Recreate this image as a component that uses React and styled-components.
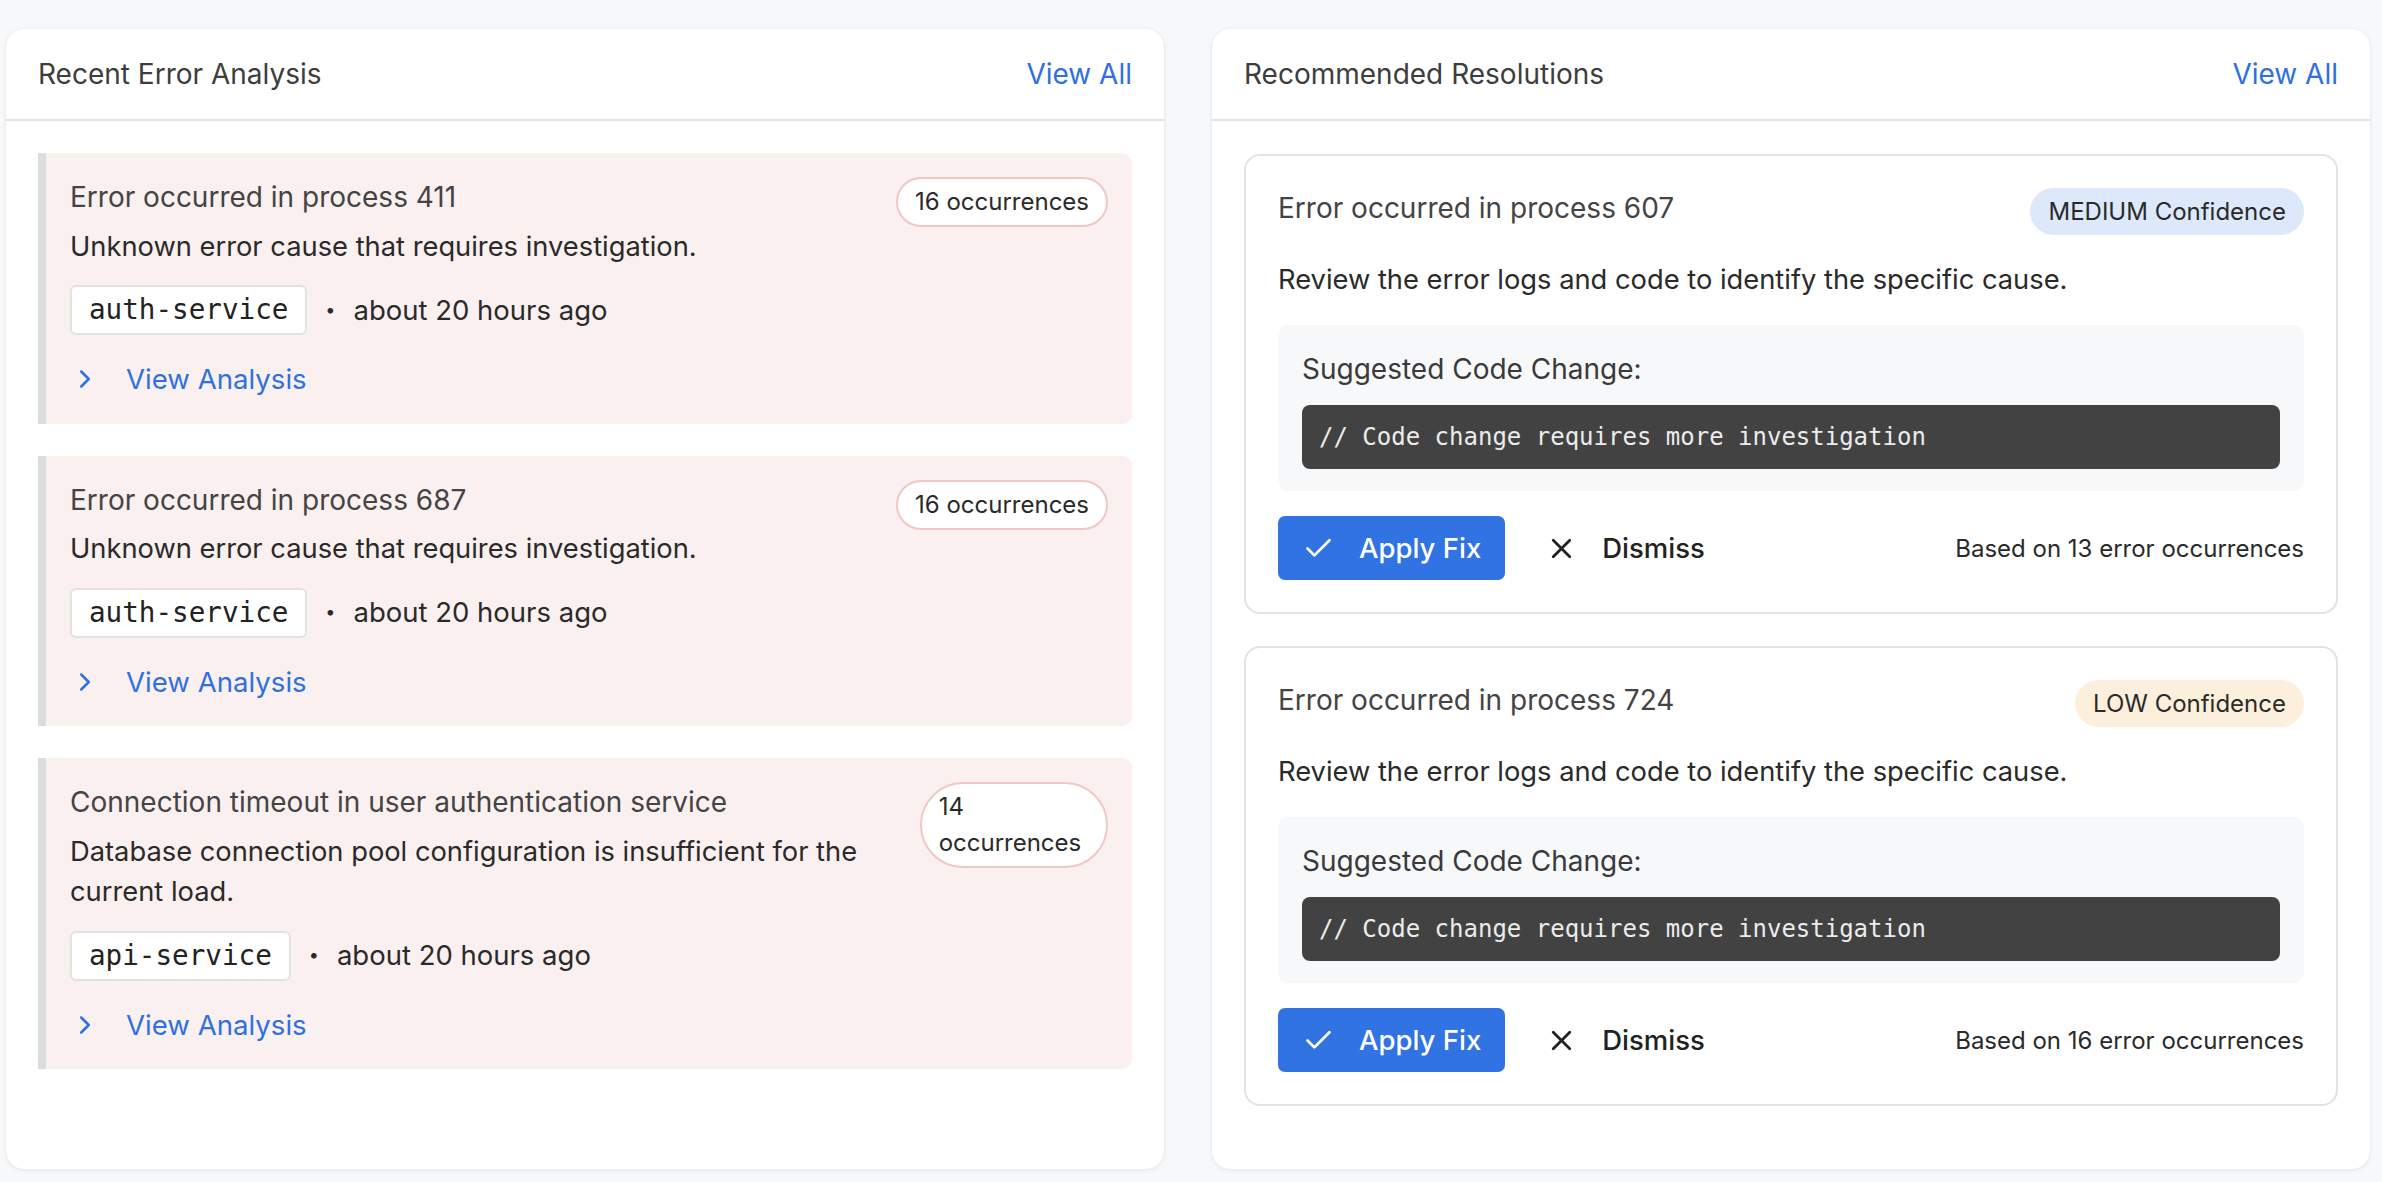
import React from "react";
import styled, { createGlobalStyle } from "styled-components";
import { ChevronRight, Check, X } from "lucide-react";

const GlobalStyle = createGlobalStyle`
  *, *::before, *::after {
    box-sizing: border-box;
  }
  body {
    margin: 0;
    background: #f7f8fa;
    font-family: Inter, "Noto Sans", sans-serif;
    color: #2a2a2a;
  }
`;

const Page = styled.main`
  display: grid;
  grid-template-columns: 1fr 1fr;
  gap: 48px;
  padding: 29px 12px 13px 6px;
`;

const Panel = styled.section`
  display: flex;
  flex-direction: column;
  height: 1140px;
  background: #fff;
  border-radius: 18px;
  box-shadow: 0 1px 4px rgba(0, 0, 0, 0.08), 0 0 1px rgba(0, 0, 0, 0.06);
  overflow: hidden;
`;

const PanelHeader = styled.header`
  display: flex;
  align-items: center;
  justify-content: space-between;
  height: 92px;
  padding: 0 32px;
  border-bottom: 2px solid #e4e4e4;
`;

const PanelTitle = styled.h2`
  margin: 0;
  font-size: 28px;
  font-weight: 400;
  color: #3d3d3d;
`;

const ViewAll = styled.a`
  font-size: 28px;
  color: #2f70e0;
  text-decoration: none;
  cursor: pointer;
`;

const PanelBody = styled.div`
  display: flex;
  flex-direction: column;
  gap: 32px;
  padding: ${(props) => (props.tight ? "33px 32px" : "32px")};
`;

/* error analysis */

const ErrorCard = styled.article`
  display: flex;
  align-items: flex-start;
  justify-content: space-between;
  gap: 24px;
  padding: 24px;
  background: #fbf0f0;
  border-left: 8px solid #dcdcdf;
  border-radius: 0 10px 10px 0;
`;

const ErrorInfo = styled.div`
  display: flex;
  flex-direction: column;
  align-items: flex-start;
`;

const ErrorTitle = styled.h3`
  margin: 0 0 9px;
  font-size: 28px;
  font-weight: 400;
  line-height: 40.5px;
  color: #444;
`;

const ErrorDesc = styled.p`
  margin: 0;
  font-size: 27.3px;
  line-height: 40.5px;
  color: #2a2a2a;
`;

const MetaRow = styled.div`
  display: flex;
  align-items: center;
  gap: 18px;
  margin-top: 18px;
  font-size: 27.5px;
  line-height: 40.5px;
  color: #2a2a2a;
`;

const ServiceChip = styled.code`
  font-family: "DejaVu Sans Mono", "Liberation Mono", monospace;
  font-size: 27.6px;
  line-height: 42px;
  padding: 2px 17px;
  background: #fff;
  border: 2px solid #e2e2e2;
  border-radius: 6px;
  color: #222;
`;

const Dot = styled.span`
  font-size: 18px;
`;

const ViewAnalysis = styled.button`
  display: flex;
  align-items: center;
  gap: 26px;
  margin-top: 24px;
  padding: 0;
  background: none;
  border: none;
  font-family: inherit;
  font-size: 27.6px;
  line-height: 40.5px;
  color: #2f70e0;
  cursor: pointer;
`;

const Occurrences = styled.span`
  padding: 5px 17px;
  font-size: 24px;
  line-height: 1.5;
  background: #fff;
  border: 2px solid #f3c6c6;
  border-radius: 999px;
  color: #2a2a2a;
`;

/* resolutions */

const ResCard = styled.article`
  padding: 32px;
  background: #fff;
  border: 2px solid #e3e3e3;
  border-radius: 16px;
`;

const ResHead = styled.div`
  display: flex;
  align-items: flex-start;
  justify-content: space-between;
  gap: 24px;
`;

const ResTitle = styled.h3`
  margin: 0;
  font-size: 28px;
  font-weight: 400;
  line-height: 40.5px;
  color: #444;
`;

const Confidence = styled.span`
  padding: 5.5px 18px;
  font-size: 24px;
  line-height: 36px;
  border-radius: 999px;
  color: #2a2a2a;
  background: ${(props) => (props.level === "LOW" ? "#fcefdc" : "#dde8fb")};
`;

const ResDesc = styled.p`
  margin: 25px 0 0;
  font-size: 27.3px;
  line-height: 40.5px;
  color: #2a2a2a;
`;

const CodeBox = styled.div`
  margin-top: 24px;
  padding: 24px 24px 22px;
  background: #f7f8fa;
  border-radius: 10px;
`;

const CodeLabel = styled.div`
  font-size: 28px;
  line-height: 40.5px;
  color: #3a3a3a;
`;

const CodeBlock = styled.pre`
  margin: 16px 0 0;
  padding: 14px 17px;
  background: #424242;
  border-radius: 8px;
  font-family: "DejaVu Sans Mono", "Liberation Mono", monospace;
  font-size: 24px;
  line-height: 36px;
  color: #ececec;
`;

const Actions = styled.div`
  display: flex;
  align-items: center;
  gap: 16px;
  margin-top: 25px;
`;

const ActionButton = styled.button`
  display: flex;
  align-items: center;
  gap: 24px;
  height: 64px;
  padding: 0 24px;
  border: none;
  border-radius: 7px;
  font-family: inherit;
  font-size: 27.5px;
  font-weight: 500;
  cursor: pointer;
  background: ${(props) => (props.primary ? "#3273e3" : "transparent")};
  color: ${(props) => (props.primary ? "#fff" : "#222")};
`;

const Based = styled.span`
  margin-left: auto;
  font-size: 24px;
  color: #2a2a2a;
`;

const errors = [
  {
    title: "Error occurred in process 411",
    desc: "Unknown error cause that requires investigation.",
    service: "auth-service",
    count: 16,
  },
  {
    title: "Error occurred in process 687",
    desc: "Unknown error cause that requires investigation.",
    service: "auth-service",
    count: 16,
  },
  {
    title: "Connection timeout in user authentication service",
    desc: "Database connection pool configuration is insufficient for the current load.",
    service: "api-service",
    count: 14,
  },
];

const resolutions = [
  { title: "Error occurred in process 607", level: "MEDIUM", count: 13 },
  { title: "Error occurred in process 724", level: "LOW", count: 16 },
];

const App = () => (
  <>
    <GlobalStyle />
    <Page>
      <Panel>
        <PanelHeader>
          <PanelTitle>Recent Error Analysis</PanelTitle>
          <ViewAll>View All</ViewAll>
        </PanelHeader>
        <PanelBody>
          {errors.map((err) => (
            <ErrorCard key={err.title}>
              <ErrorInfo>
                <ErrorTitle>{err.title}</ErrorTitle>
                <ErrorDesc>{err.desc}</ErrorDesc>
                <MetaRow>
                  <ServiceChip>{err.service}</ServiceChip>
                  <Dot>•</Dot>
                  <span>about 20 hours ago</span>
                </MetaRow>
                <ViewAnalysis>
                  <ChevronRight size={30} />
                  View Analysis
                </ViewAnalysis>
              </ErrorInfo>
              <Occurrences>{err.count} occurrences</Occurrences>
            </ErrorCard>
          ))}
        </PanelBody>
      </Panel>

      <Panel>
        <PanelHeader>
          <PanelTitle>Recommended Resolutions</PanelTitle>
          <ViewAll>View All</ViewAll>
        </PanelHeader>
        <PanelBody tight>
          {resolutions.map((res) => (
            <ResCard key={res.title}>
              <ResHead>
                <ResTitle>{res.title}</ResTitle>
                <Confidence level={res.level}>{res.level} Confidence</Confidence>
              </ResHead>
              <ResDesc>
                Review the error logs and code to identify the specific cause.
              </ResDesc>
              <CodeBox>
                <CodeLabel>Suggested Code Change:</CodeLabel>
                <CodeBlock>// Code change requires more investigation</CodeBlock>
              </CodeBox>
              <Actions>
                <ActionButton primary>
                  <Check size={33} />
                  Apply Fix
                </ActionButton>
                <ActionButton>
                  <X size={33} />
                  Dismiss
                </ActionButton>
                <Based>Based on {res.count} error occurrences</Based>
              </Actions>
            </ResCard>
          ))}
        </PanelBody>
      </Panel>
    </Page>
  </>
);

export default App;
